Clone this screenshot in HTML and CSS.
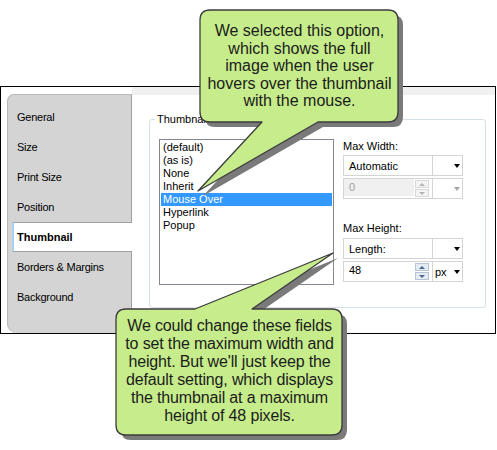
FILE: index.html
```html
<!DOCTYPE html>
<html>
<head>
<meta charset="utf-8">
<link rel="stylesheet" href="styles.css">
</head>
<body>
<div class="stage">
  <div class="window">
    <div class="tabs">
      <div class="tabpanel">
        <div class="tab">General</div>
        <div class="tab">Size</div>
        <div class="tab">Print Size</div>
        <div class="tab">Position</div>
        <div class="tab active">Thumbnail</div>
        <div class="tab">Borders &amp; Margins</div>
        <div class="tab">Background</div>
      </div>
    </div>
    <div class="pane">
      <div class="strip"></div>
      <div class="group">
        <span class="legend">Thumbnail</span>
        <div class="list">
          <div class="item">(default)</div>
          <div class="item">(as is)</div>
          <div class="item">None</div>
          <div class="item">Inherit</div>
          <div class="item sel">Mouse Over</div>
          <div class="item">Hyperlink</div>
          <div class="item">Popup</div>
        </div>
        <div class="fields">
          <div class="label">Max Width:</div>
          <div class="box">
            <div class="main"><span class="val">Automatic</span></div>
            <div class="side"><span class="arrow"></span></div>
          </div>
          <div class="box">
            <div class="main spinmain">
              <div class="field disabled">0</div>
              <div class="spin disabled"><span class="up"></span><span class="down"></span></div>
            </div>
            <div class="side"><span class="arrow dis"></span></div>
          </div>
          <div class="label second">Max Height:</div>
          <div class="box">
            <div class="main"><span class="val">Length:</span></div>
            <div class="side"><span class="arrow"></span></div>
          </div>
          <div class="box">
            <div class="main spinmain">
              <div class="field">48</div>
              <div class="spin"><span class="up"></span><span class="down"></span></div>
            </div>
            <div class="side"><span class="unit">px</span><span class="arrow"></span></div>
          </div>
        </div>
      </div>
    </div>
  </div>

  <svg class="callouts" width="497" height="450" viewBox="0 0 497 450" xmlns="http://www.w3.org/2000/svg">
    <g transform="translate(5,5)">
      <path class="shadow" d="M210,10 H388 Q398,10 398,20 V112 Q398,122 388,122 H318 L198,191 L262,122 H210 Q200,122 200,112 V20 Q200,10 210,10 Z"/>
      <path class="shadow" d="M126,309 H195 L333,253 L252,309 H332 Q342,309 342,319 V425 Q342,435 332,435 H126 Q116,435 116,425 V319 Q116,309 126,309 Z"/>
    </g>
    <path class="bubble" d="M210,10 H388 Q398,10 398,20 V112 Q398,122 388,122 H318 L198,191 L262,122 H210 Q200,122 200,112 V20 Q200,10 210,10 Z"/>
    <path class="bubble" d="M126,309 H195 L333,253 L252,309 H332 Q342,309 342,319 V425 Q342,435 332,435 H126 Q116,435 116,425 V319 Q116,309 126,309 Z"/>
  </svg>

  <div class="note note-top">We selected this option,<br>which shows the full<br>image when the user<br>hovers over the thumbnail<br>with the mouse.</div>
  <div class="note note-bottom">We could change these fields<br>to set the maximum width and<br>height. But we'll just keep the<br>default setting, which displays<br>the thumbnail at a maximum<br>height of 48 pixels.</div>
</div>
</body>
</html>
```

FILE: styles.css
```css
html, body {
  margin: 0;
  background: #fff;
}
body {
  font-family: "Liberation Sans", Arial, sans-serif;
  font-size: 11px;
  color: #000;
}
.stage {
  position: relative;
  width: 497px;
  height: 450px;
  overflow: hidden;
  padding-top: 86px;
  box-sizing: border-box;
}
.window {
  width: 496px;
  height: 248px;
  border: 1px solid #000;
  box-sizing: border-box;
  display: flex;
  background: #fff;
}
.tabs {
  width: 131px;
  flex: none;
  padding: 7px 0 0 6px;
  box-sizing: border-box;
  display: flex;
}
.tabpanel {
  width: 125px;
  box-sizing: border-box;
  background: #d4d4d4;
  border: 1px solid #b8b8b8;
  border-right-color: #a0a0a0;
  border-bottom: none;
  border-radius: 7px 0 0 9px;
  padding-top: 7px;
}
.tab {
  height: 30px;
  line-height: 30px;
  padding-left: 9px;
  white-space: nowrap;
  letter-spacing: -0.25px;
}
.tab.active {
  box-sizing: border-box;
  background: #fff;
  margin-left: 4px;
  margin-right: -1px;
  border-top: 1px solid #a0a0a0;
  border-bottom: 1px solid #a0a0a0;
  border-left: 2px solid #a9d0f5;
  padding-left: 3px;
  line-height: 28px;
  font-weight: bold;
  letter-spacing: 0;
}
.pane {
  flex: 1;
  display: flex;
  flex-direction: column;
}
.strip {
  height: 8px;
  background: #f0f0f0;
}
.group {
  position: relative;
  margin: 24px 0 0 17px;
  width: 337px;
  height: 189px;
  border: 1px solid #d5dfe5;
  border-radius: 3px;
  box-sizing: border-box;
  padding: 19px 0 0 9px;
  display: flex;
  align-items: flex-start;
  gap: 9px;
}
.legend {
  position: absolute;
  top: -7px;
  left: 5px;
  padding: 0 2px;
  background: #fff;
  line-height: 13px;
}
.list {
  width: 175px;
  height: 146px;
  border: 1px solid #828790;
  box-sizing: border-box;
  padding: 1px;
}
.item {
  height: 13px;
  line-height: 13px;
  padding-left: 2px;
}
.item.sel {
  background: #3399ff;
  color: #fff;
}
.fields {
  width: 120px;
  display: flex;
  flex-direction: column;
  padding-top: 1px;
}
.label {
  height: 13px;
  line-height: 13px;
  margin-bottom: 2px;
}
.label.second {
  margin-top: 23px;
  margin-bottom: 3px;
}
.box {
  height: 21px;
  display: flex;
  border: 1px solid #d4d4d4;
  box-sizing: border-box;
}
.box + .box {
  margin-top: 2px;
}
.main {
  width: 89px;
  flex: none;
  box-sizing: border-box;
  border-right: 1px solid #d4d4d4;
  display: flex;
  align-items: center;
  padding-left: 5px;
}
.spinmain {
  padding-left: 0;
  align-items: stretch;
}
.field {
  flex: 1;
  padding-left: 5px;
  line-height: 17px;
  height: 17px;
}
.field.disabled {
  background: #f0f0f0;
  color: #a0a0a0;
}
.spin {
  width: 14px;
  margin: 1px 3px 1px 1px;
  display: flex;
  flex-direction: column;
  gap: 1px;
}
.spin span {
  flex: 1;
  box-sizing: border-box;
  border: 1px solid #b7c4d6;
  background: #e4ebf3;
  display: flex;
  align-items: center;
  justify-content: center;
}
.spin .up::before,
.spin .down::before {
  content: "";
  border-left: 3px solid transparent;
  border-right: 3px solid transparent;
}
.spin .up::before {
  border-bottom: 3px solid #4c6490;
}
.spin .down::before {
  border-top: 3px solid #4c6490;
}
.spin.disabled span {
  border-color: #d8d8d8;
  background: #f4f4f4;
}
.spin.disabled .up::before {
  border-bottom-color: #b4b4b4;
}
.spin.disabled .down::before {
  border-top-color: #b4b4b4;
}
.side {
  flex: 1;
  display: flex;
  align-items: center;
  padding: 0 2px 0 2px;
}
.arrow {
  margin-left: auto;
  width: 0;
  height: 0;
  border-left: 3.5px solid transparent;
  border-right: 3.5px solid transparent;
  border-top: 4px solid #000;
}
.arrow.dis {
  border-top-color: #a6a6a6;
}
.callouts {
  position: absolute;
  left: 0;
  top: 0;
}
.shadow {
  fill: #7a7a7a;
}
.bubble {
  fill: #c6ec8b;
  stroke: #3c3c3c;
  stroke-width: 1.3;
  stroke-linejoin: round;
}
.note {
  position: absolute;
  text-align: center;
  font-size: 16px;
  color: #1c1c1c;
  white-space: nowrap;
}
.note-top {
  left: 200px;
  top: 22px;
  width: 199px;
  line-height: 17.5px;
}
.note-bottom {
  left: 116px;
  top: 317px;
  width: 227px;
  line-height: 18px;
  letter-spacing: -0.15px;
}
```
